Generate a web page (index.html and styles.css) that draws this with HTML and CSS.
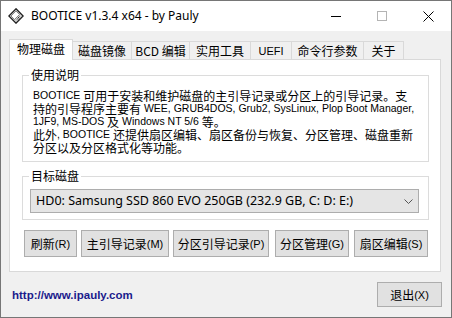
FILE: index.html
```html
<!DOCTYPE html>
<html lang="zh-CN">
<head>
<meta charset="utf-8">
<title>BOOTICE</title>
<link rel="stylesheet" href="styles.css">
</head>
<body>
<div class="window">
  <div class="titlebar">
    <svg class="appicon" width="16" height="16" viewBox="0 0 16 16">
      <polygon points="8,0.8 15.2,8 8,15.2 0.8,8" fill="#d8d8d8" stroke="#1e1e1e" stroke-width="1.3"/>
      <polygon points="8,3 11.5,6.5 6.5,11.5 3,8" fill="#ffffff" stroke="#6a6a6a" stroke-width="0.8"/>
      <line x1="9.5" y1="10.5" x2="11.5" y2="8.5" stroke="#333" stroke-width="1"/>
      <line x1="10.8" y1="11.8" x2="12.8" y2="9.8" stroke="#333" stroke-width="1"/>
      <line x1="8.2" y1="12.3" x2="10.2" y2="10.3" stroke="#777" stroke-width="0.8"/>
    </svg>
    <span class="title">BOOTICE v1.3.4 x64 - by Pauly</span>
    <div class="caption">
      <div class="cbtn"><span class="ico-min"></span></div>
      <div class="cbtn"><span class="ico-max"></span></div>
      <div class="cbtn">
        <svg width="11" height="11" viewBox="0 0 11 11"><path d="M0.5 0.5 L10.5 10.5 M10.5 0.5 L0.5 10.5" stroke="#000" stroke-width="1" fill="none"/></svg>
      </div>
    </div>
  </div>
  <div class="client">
    <div class="tabs">
      <div class="tab active t1">物理磁盘</div>
      <div class="tab t2">磁盘镜像</div>
      <div class="tab t3">BCD 编辑</div>
      <div class="tab t4">实用工具</div>
      <div class="tab t5 latin">UEFI</div>
      <div class="tab t6">命令行参数</div>
      <div class="tab t7">关于</div>
    </div>
    <div class="panel">
      <fieldset class="group g-info">
        <legend>使用说明</legend>
        <div class="desc">
          <div class="ln"><span class="en">BOOTICE </span>可用于安装和维护磁盘的主引导记录或分区上的引导记录。支</div>
          <div class="ln">持的引导程序主要有<span class="en"> WEE, GRUB4DOS, Grub2, SysLinux, Plop Boot Manager,</span></div>
          <div class="ln"><span class="en">1JF9, MS-DOS </span>及<span class="en"> Windows NT 5/6 </span>等。</div>
          <div class="ln">此外<span class="en">, BOOTICE </span>还提供扇区编辑、扇区备份与恢复、分区管理、磁盘重新</div>
          <div class="ln">分区以及分区格式化等功能。</div>
        </div>
      </fieldset>
      <fieldset class="group g-disk">
        <legend>目标磁盘</legend>
        <div class="combo">
          <span class="combo-text">HD0: Samsung SSD 860 EVO 250GB (232.9 GB, C: D: E:)</span>
          <svg class="chev" width="9" height="5" viewBox="0 0 9 5"><path d="M0.5 0.5 L4.5 4.5 L8.5 0.5" stroke="#555" stroke-width="1" fill="none"/></svg>
        </div>
      </fieldset>
      <div class="btnrow">
        <button class="btn b1">刷新<span class="acc">(R)</span></button>
        <button class="btn b2">主引导记录<span class="acc">(M)</span></button>
        <button class="btn b3">分区引导记录<span class="acc">(P)</span></button>
        <button class="btn b4">分区管理<span class="acc">(G)</span></button>
        <button class="btn b5">扇区编辑<span class="acc">(S)</span></button>
      </div>
    </div>
    <div class="footer">
      <a class="link">http://www.ipauly.com</a>
      <button class="btn exit">退出<span class="acc">(X)</span></button>
    </div>
  </div>
</div>
</body>
</html>
```
FILE: styles.css
```css
html, body {
  margin: 0;
  padding: 0;
}
body {
  width: 452px;
  height: 318px;
  overflow: hidden;
  font-family: "Liberation Sans", "Noto Sans CJK SC", sans-serif;
  color: #000;
}
.window {
  box-sizing: border-box;
  width: 452px;
  height: 318px;
  border: 1px solid #767676;
  display: flex;
  flex-direction: column;
  background: #f0f0f0;
}
.titlebar {
  height: 30px;
  flex: none;
  background: #fff;
  display: flex;
  align-items: center;
}
.appicon {
  margin-left: 7px;
  flex: none;
}
.title {
  margin-left: 7px;
  font-family: "Noto Sans", "Open Sans", sans-serif;
  font-size: 12px;
  line-height: 16px;
  color: #000;
}
.caption {
  margin-left: auto;
  display: flex;
  height: 30px;
}
.cbtn {
  width: 46px;
  height: 30px;
  display: flex;
  align-items: center;
  justify-content: center;
}
.ico-min {
  width: 10px;
  height: 1px;
  background: #000;
}
.ico-max {
  box-sizing: border-box;
  width: 10px;
  height: 10px;
  border: 1px solid #b4b4b4;
}
.client {
  flex: 1;
  display: flex;
  flex-direction: column;
  padding: 8px 0 0 8px;
}
.tabs {
  display: flex;
  align-items: flex-end;
  height: 20px;
  flex: none;
}
.tab {
  box-sizing: border-box;
  height: 18px;
  background: #f0f0f0;
  border-top: 1px solid #d9d9d9;
  border-right: 1px solid #d9d9d9;
  display: flex;
  align-items: center;
  justify-content: center;
  font-family: "Noto Sans CJK SC", sans-serif;
  font-size: 12px;
  line-height: 14px;
}
.tab.active {
  height: 21px;
  margin-bottom: -1px;
  background: #fff;
  border-left: 1px solid #d9d9d9;
  position: relative;
  z-index: 1;
  padding-bottom: 2px;
}
.tab.latin {
  font-family: "Liberation Sans", sans-serif;
  font-size: 11px;
}
.t1 { width: 64px; }
.t2 { width: 59px; }
.t3 { width: 58px; }
.t4 { width: 61px; }
.t5 { width: 41px; }
.t6 { width: 72px; }
.t7 { width: 40px; }
.panel {
  box-sizing: border-box;
  width: 432px;
  height: 213px;
  flex: none;
  background: #fff;
  border: 1px solid #d9d9d9;
  padding: 7px 11px 0 12px;
}
.group {
  margin: 0;
  border: 1px solid #dcdcdc;
  min-width: 0;
}
.group legend {
  padding: 0 2px;
  font-family: "Noto Sans CJK SC", sans-serif;
  font-size: 12px;
  line-height: 16px;
  height: 16px;
}
.g-info {
  padding: 6px 10px 7px 10px;
}
.g-info legend {
  margin-left: -4px;
}
.desc {
  font-family: "Noto Sans CJK SC", sans-serif;
  font-size: 12px;
  white-space: nowrap;
}
.ln {
  height: 13px;
  line-height: 13px;
  display: flex;
  align-items: center;
}
.desc .en {
  font-family: "Liberation Sans", sans-serif;
  font-size: 10.5px;
  white-space: pre;
}
.g-disk {
  margin-top: 6px;
  padding: 5px 9px 6px 7px;
}
.g-disk legend {
  margin-left: -1px;
}
.combo {
  box-sizing: border-box;
  height: 24px;
  background: #e5e5e5;
  border: 1px solid #adadad;
  display: flex;
  align-items: center;
  padding: 0 5px 0 5px;
}
.combo-text {
  font-family: "Noto Sans", sans-serif;
  font-size: 12.5px;
  line-height: 16px;
  white-space: nowrap;
}
.chev {
  margin-left: auto;
}
.btnrow {
  display: flex;
  margin: 10px 0 0 2px;
}
.btn {
  box-sizing: border-box;
  height: 27px;
  padding: 0;
  margin: 0;
  background: #e1e1e1;
  border: 1px solid #adadad;
  border-radius: 0;
  font-family: "Noto Sans CJK SC", sans-serif;
  font-size: 12px;
  line-height: 16px;
  color: #000;
  display: flex;
  align-items: center;
  justify-content: center;
}
.acc {
  font-family: "Liberation Sans", sans-serif;
  font-size: 11px;
}
.b1 { width: 53px; }
.b2 { width: 88px; margin-left: 4px; }
.b3 { width: 96px; margin-left: 4px; }
.b4 { width: 74px; margin-left: 6px; }
.b5 { width: 74px; margin-left: 5px; }
.footer {
  flex: 1;
  display: flex;
  align-items: center;
  padding: 0 9px 0 3px;
}
.link {
  font-family: "Liberation Sans", sans-serif;
  font-weight: bold;
  font-size: 11.5px;
  color: #1b1b8c;
  text-decoration: none;
}
.exit {
  margin-left: auto;
  width: 65px;
  height: 25px;
}
```
